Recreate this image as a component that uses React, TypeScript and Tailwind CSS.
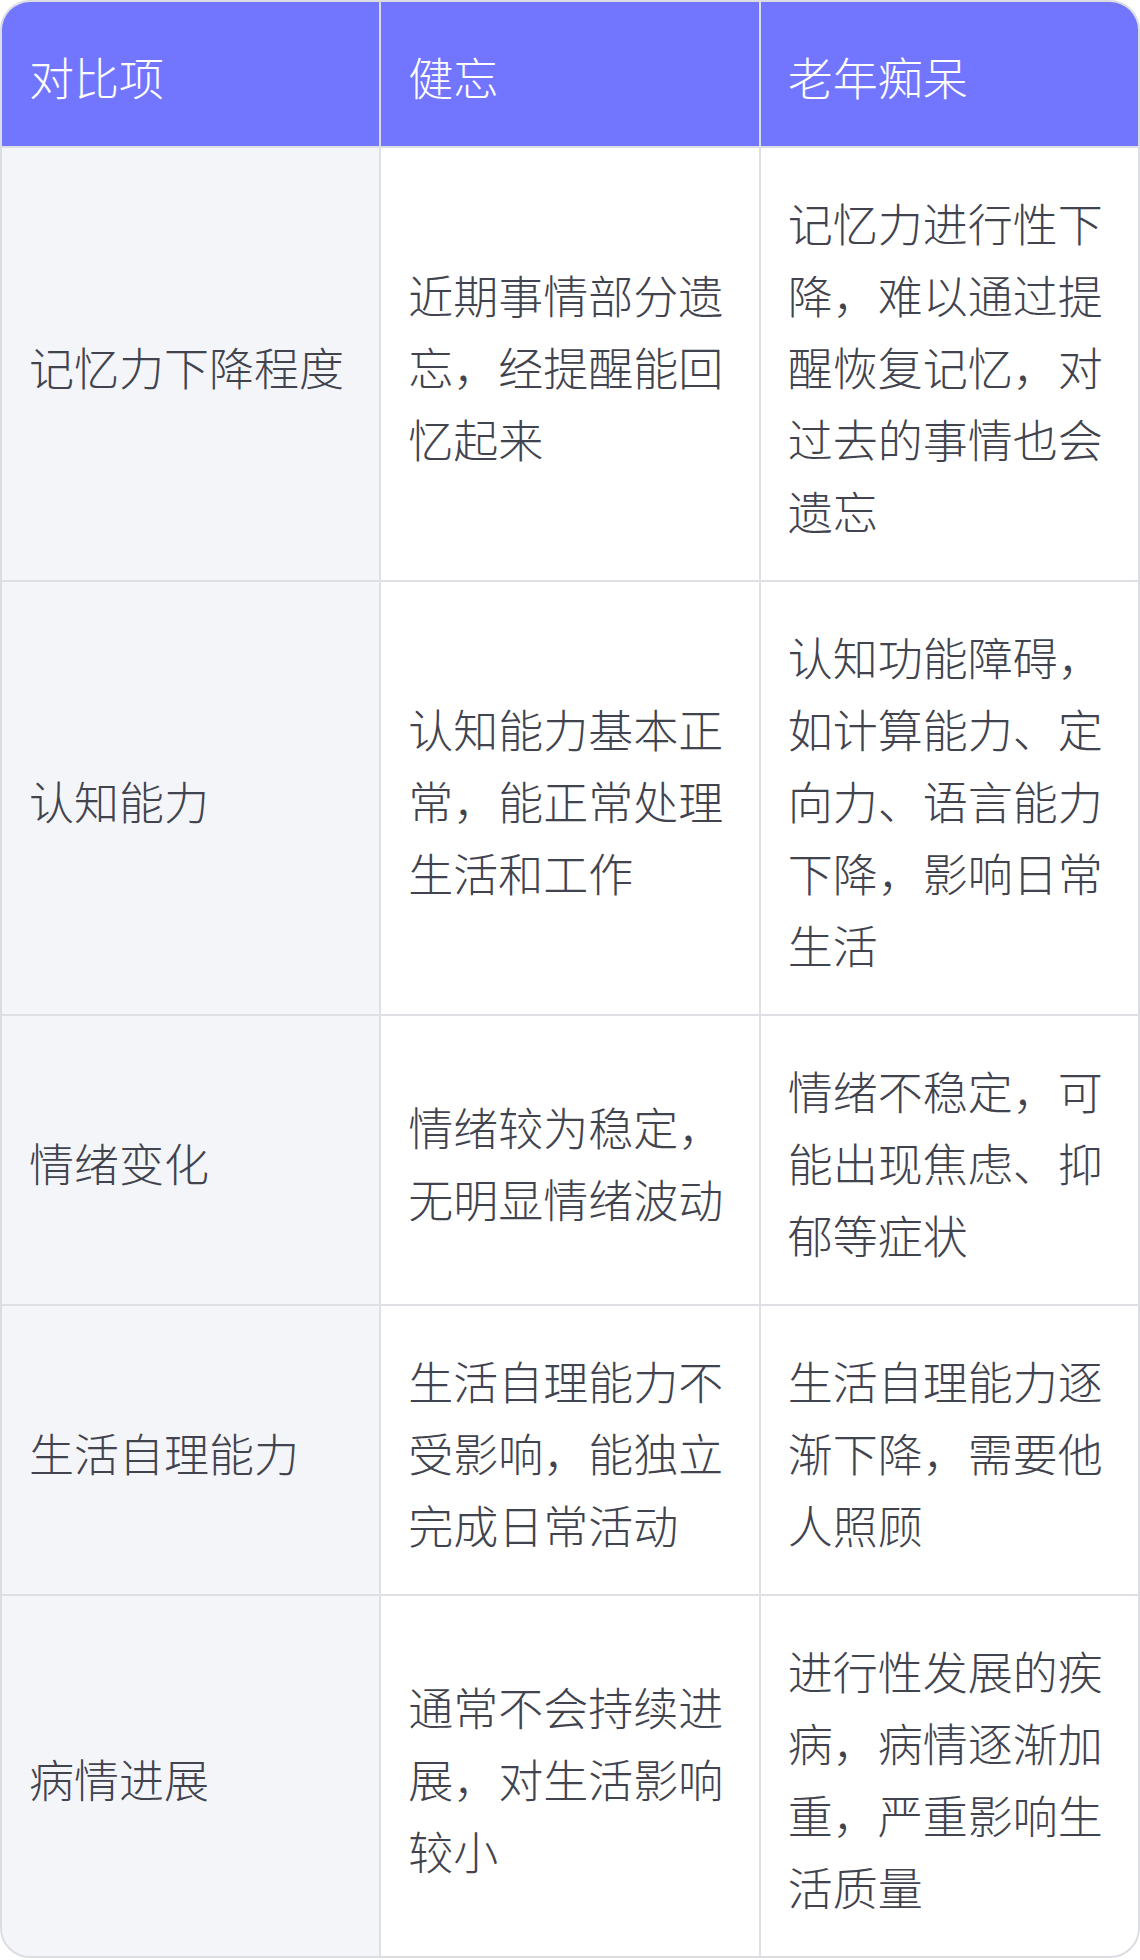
import React from "react";

const rows: [string, string, string][] = [
  ["记忆力下降程度", "近期事情部分遗忘，经提醒能回忆起来", "记忆力进行性下降，难以通过提醒恢复记忆，对过去的事情也会遗忘"],
  ["认知能力", "认知能力基本正常，能正常处理生活和工作", "认知功能障碍，如计算能力、定向力、语言能力下降，影响日常生活"],
  ["情绪变化", "情绪较为稳定，无明显情绪波动", "情绪不稳定，可能出现焦虑、抑郁等症状"],
  ["生活自理能力", "生活自理能力不受影响，能独立完成日常活动", "生活自理能力逐渐下降，需要他人照顾"],
  ["病情进展", "通常不会持续进展，对生活影响较小", "进行性发展的疾病，病情逐渐加重，严重影响生活质量"],
];

export default function App() {
  return (
    <div
      className="w-[1140px] bg-white"
      style={{ fontFamily: '"Noto Sans CJK SC", "Noto Sans", sans-serif' }}
    >
      <div className="overflow-hidden rounded-[30px] border-2 border-[#dcdde2] text-[45px] leading-[72px] font-light">
        <div className="grid grid-cols-3 gap-x-[2px] bg-[#dcdde6]">
          {["对比项", "健忘", "老年痴呆"].map((h) => (
            <div key={h} className="bg-[#7276ff] px-[27px] pt-[39px] pb-[33px] text-white">
              {h}
            </div>
          ))}
        </div>
        {rows.map((r, i) => (
          <div key={i} className="grid grid-cols-3 gap-x-[2px] border-t-2 border-[#dfe0e5] bg-[#dfe0e5]">
            <div className="flex items-center bg-[#f4f5f9] px-[27px] pt-[39px] pb-[33px] text-[#41434e]">{r[0]}</div>
            <div className="flex items-center bg-white px-[27px] pt-[39px] pb-[33px] text-[#41434e]">{r[1]}</div>
            <div className="flex items-center bg-white px-[27px] pt-[39px] pb-[33px] text-[#41434e]">{r[2]}</div>
          </div>
        ))}
      </div>
    </div>
  );
}
